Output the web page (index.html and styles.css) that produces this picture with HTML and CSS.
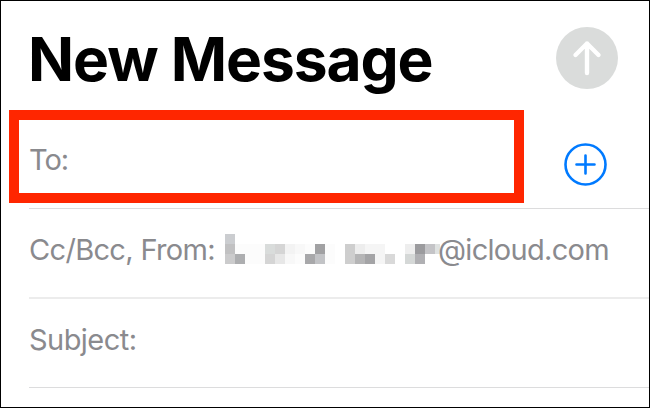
FILE: index.html
```html
<!DOCTYPE html>
<html lang="en">
<head>
<meta charset="utf-8">
<title>New Message</title>
<link rel="stylesheet" href="styles.css">
</head>
<body>
<main class="composer">
  <header class="header">
    <h1 class="title">New Message</h1>
    <svg class="send" viewBox="0 0 62 62" aria-label="Send">
      <circle cx="31" cy="31" r="31" fill="#dadcdb"/>
      <path d="M31 46V16.500M19.500 28 31 16.500 42.500 28" fill="none" stroke="#fff" stroke-width="4.400" stroke-linecap="round" stroke-linejoin="round"/>
    </svg>
  </header>
  <div class="row row-to">
    <span class="label label-to">To:</span>
    <svg class="add" viewBox="0 0 43 43" aria-label="Add contact">
      <circle cx="21.5" cy="21.5" r="20" fill="none" stroke="#007aff" stroke-width="2.6"/>
      <path d="M21.5 12.5v18M12.5 21.5h18" stroke="#007aff" stroke-width="2.6" stroke-linecap="round"/>
    </svg>
    <div class="highlight"></div>
  </div>
  <div class="row row-from">
    <span class="label label-from">Cc/Bcc, From:</span>
    <svg class="mosaic" viewBox="0 0 215 30" shape-rendering="crispEdges" aria-hidden="true">
      <path fill="#cbcdd0" d="M0 0h10v10H0z"/>
      <path fill="#c1c1c2" d="M0 10h10v10H0z"/>
      <path fill="#cbcbcc" d="M0 20h10v10H0z"/>
      <path fill="#adaeb0" d="M10 20h10v10H10z"/>
      <path fill="#fcfcfc" d="M10 10h30v10H10zM20 20h20v10H20z"/>
      <path fill="#d9dcdb" d="M40 10h10v10H40z"/>
      <path fill="#d5d5d5" d="M50 10h10v10H50zM40 20h10v10H40z"/>
      <path fill="#e7e7e7" d="M50 20h10v10H50z"/>
      <path fill="#f3f3f3" d="M60 10h10v10H60z"/>
      <path fill="#f8f8f8" d="M70 10h10v10H70zM60 20h10v10H60z"/>
      <path fill="#fcfcfc" d="M80 10h10v10H80zM70 20h10v10H70zM100 10h10v20h-10z"/>
      <path fill="#a1a1a3" d="M90 10h10v10H90z"/>
      <path fill="#a8a8aa" d="M80 20h10v10H80z"/>
      <path fill="#c2c3c6" d="M90 20h10v10H90z"/>
      <path fill="#cecece" d="M120 10h10v20h-10z"/>
      <path fill="#ededed" d="M130 10h10v10h-10z"/>
      <path fill="#f5f5f5" d="M140 10h20v10h-20zM150 20h10v10h-10z"/>
      <path fill="#b5b5b6" d="M130 20h10v10h-10z"/>
      <path fill="#a4a4a6" d="M140 20h10v10h-10z"/>
      <path fill="#d9d9d9" d="M160 20h10v10h-10z"/>
      <path fill="#eeeeee" d="M180 10h10v10h-10z"/>
      <path fill="#d5d8d7" d="M180 20h10v10h-10z"/>
      <path fill="#9b9b9e" d="M190 10h10v10h-10z"/>
      <path fill="#b0b0b3" d="M190 20h10v10h-10z"/>
      <path fill="#c4c4c7" d="M200 10h10v10h-10z"/>
      <path fill="#dfe2e1" d="M210 10h5v10h-5z"/>
    </svg>
    <span class="label label-domain">@icloud.com</span>
  </div>
  <div class="row row-subject">
    <span class="label label-subject">Subject:</span>
  </div>
</main>
</body>
</html>
```

FILE: styles.css
```css
* { box-sizing: border-box; }
body { margin: 0; background: #fff; }
.composer {
  width: 650px;
  height: 408px;
  padding-left: 28px;
  border: 1px solid #000;
  background: #fff;
  font-family: Inter, "Liberation Sans", sans-serif;
  overflow: hidden;
}
.header {
  display: flex;
  justify-content: space-between;
  height: 109px;
  padding: 26px 31.5px 0 0;
}
.title {
  margin: -5px 0 0 -1px;
  color: #000;
  font-size: 60.5px;
  font-weight: 700;
  line-height: 74px;
  letter-spacing: -1.1px;
  white-space: nowrap;
}
.send { width: 62px; height: 62px; flex: none; }
.row {
  position: relative;
  display: flex;
  align-items: flex-start;
  border-bottom: 1px solid #dcdcdd;
}
.row-to { height: 99px; padding: 32px 42.5px 0 0; justify-content: space-between; }
.row-from { height: 90px; padding-top: 23px; border-bottom: 2px solid #ececec; }
.row-subject { height: 89px; padding-top: 23px; }
.label {
  color: #8a8a8e;
  font-size: 29px;
  line-height: 36px;
  white-space: nowrap;
}
.add { width: 43px; height: 43px; flex: none; margin-top: 0.5px; }
.highlight {
  position: absolute;
  left: -20px;
  top: 0;
  width: 515px;
  height: 93px;
  border: 10px solid #ff2600;
}
.label-from { width: 196px; flex: none; letter-spacing: -0.68px; }
.mosaic { width: 215px; height: 30px; flex: none; margin-top: 2px; }
.label-domain { margin-left: -2px; letter-spacing: -0.7px; }
.label-to { letter-spacing: -1px; }
.label-subject { letter-spacing: -0.55px; }
```
